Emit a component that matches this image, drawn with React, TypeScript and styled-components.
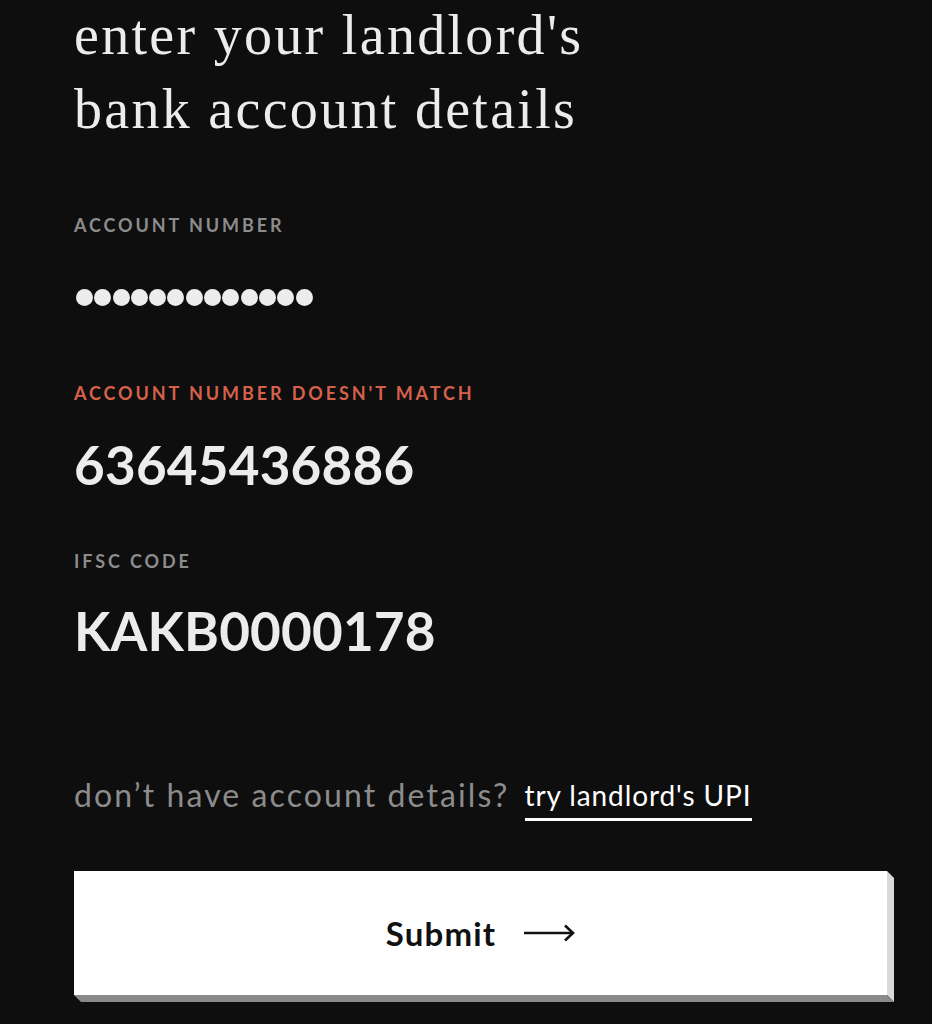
import React from "react";
import styled, { createGlobalStyle } from "styled-components";

const GlobalStyle = createGlobalStyle`
  html, body {
    margin: 0;
    padding: 0;
    background: #0e0e0e;
  }
  body {
    font-family: "Lato", "Liberation Sans", sans-serif;
  }
`;

const Page = styled.div`
  min-height: 1024px;
  padding: 0 38px 0 74px;
  box-sizing: border-box;
  background: #0e0e0e;
  color: #ececec;
`;

const Heading = styled.h1`
  margin: -2px 0 0;
  font-family: "Liberation Serif", serif;
  font-weight: 400;
  font-size: 56px;
  line-height: 74px;
  letter-spacing: 2.3px;
  color: #ececec;
`;

const Label = styled.div<{ $error?: boolean; $gap: number }>`
  margin-top: ${(p) => p.$gap}px;
  font-size: 18px;
  line-height: 20px;
  font-weight: 700;
  letter-spacing: 2.9px;
  text-transform: uppercase;
  color: ${(p) => (p.$error ? "#d5614b" : "#8c8c8c")};
`;

const Dots = styled.div`
  margin-top: 52px;
  height: 20px;
  display: flex;
  align-items: center;
  gap: 1.3px;
  padding-left: 2px;
`;

const Dot = styled.span`
  width: 17px;
  height: 17px;
  border-radius: 50%;
  background: #ececec;
`;

const Value = styled.div<{ $gap: number }>`
  margin-top: ${(p) => p.$gap}px;
  font-size: 53px;
  line-height: 56px;
  font-weight: 700;
  letter-spacing: 0.2px;
  color: #ececec;
`;

const Footer = styled.div`
  margin-top: 118px;
  display: flex;
  align-items: flex-start;
  gap: 15px;
  font-size: 32px;
  line-height: 36px;
`;

const Muted = styled.span`
  color: #8c8c8c;
  letter-spacing: 2.1px;
`;

const Link = styled.a`
  color: #ffffff;
  font-size: 28px;
  text-decoration: none;
  padding-bottom: 5px;
  border-bottom: 3px solid #ffffff;
  letter-spacing: 0.9px;
`;

const Button = styled.button`
  position: relative;
  margin-top: 50px;
  width: 813px;
  height: 124px;
  border: none;
  background: #ffffff;
  display: flex;
  align-items: center;
  justify-content: center;
  gap: 27px;
  font-family: "Lato", "Liberation Sans", sans-serif;
  font-size: 33px;
  font-weight: 700;
  letter-spacing: 1.2px;
  color: #111111;
  cursor: pointer;

  &::before {
    content: "";
    position: absolute;
    top: 0;
    left: 100%;
    width: 7px;
    height: calc(100% + 7px);
    background: #dadada;
    clip-path: polygon(0 0, 100% 7px, 100% 100%, 0 calc(100% - 7px));
  }

  &::after {
    content: "";
    position: absolute;
    top: 100%;
    left: 0;
    width: calc(100% + 7px);
    height: 7px;
    background: #8a8a8a;
    clip-path: polygon(0 0, calc(100% - 7px) 0, 100% 100%, 7px 100%);
  }
`;

const Arrow = () => (
  <svg width="52" height="18" viewBox="0 0 52 18" fill="none">
    <path d="M1 9H50" stroke="#111" strokeWidth="2.6" />
    <path d="M42 1.5L50 9L42 16.5" stroke="#111" strokeWidth="2.6" />
  </svg>
);

export default function App() {
  return (
    <>
      <GlobalStyle />
      <Page>
        <Heading>
          enter your landlord's
          <br />
          bank account details
        </Heading>

        <Label $gap={69}>Account number</Label>
        <Dots>
          {Array.from({ length: 13 }).map((_, i) => (
            <Dot key={i} />
          ))}
        </Dots>

        <Label $gap={76} $error>
          Account number doesn't match
        </Label>
        <Value $gap={34}>63645436886</Value>

        <Label $gap={58}>IFSC code</Label>
        <Value $gap={32}>KAKB0000178</Value>

        <Footer>
          <Muted>don’t have account details?</Muted>
          <Link href="#">try landlord's UPI</Link>
        </Footer>

        <Button type="button">
          Submit
          <Arrow />
        </Button>
      </Page>
    </>
  );
}
